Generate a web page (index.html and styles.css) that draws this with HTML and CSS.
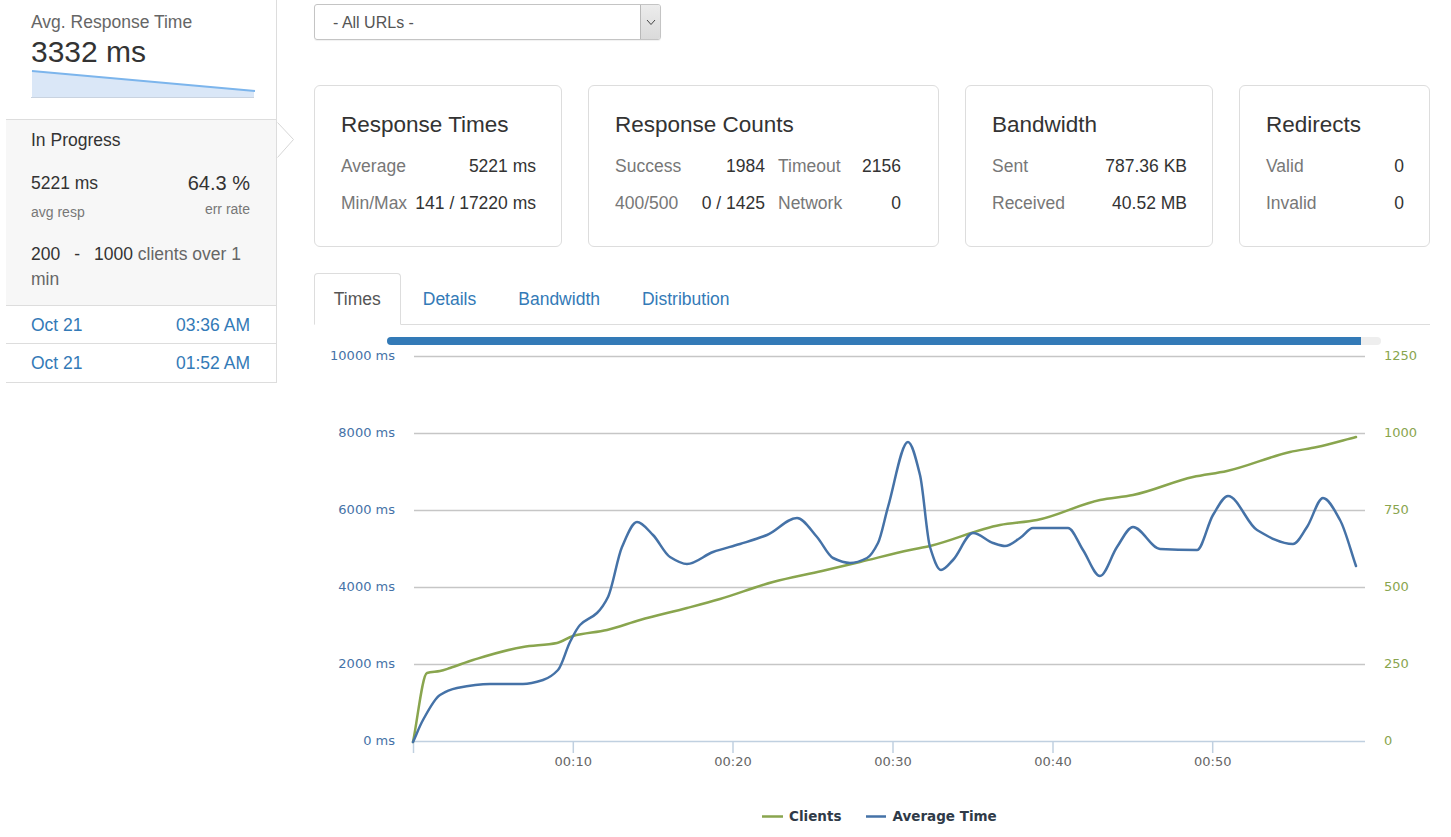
FILE: index.html
```html
<!DOCTYPE html>
<html lang="en">
<head>
<meta charset="utf-8">
<title>Load Test</title>
<link rel="stylesheet" href="styles.css">
</head>
<body>
<div class="page">
  <aside class="sidebar">
    <div class="summary">
      <div class="summary-label">Avg. Response Time</div>
      <div class="summary-value">3332 ms</div>
      <svg class="spark" width="225" height="30" viewBox="31 67 225 30">
        <polygon points="32,70 254,90 254,96 32,96" fill="#dae7f7"/>
        <line x1="31" y1="96.5" x2="254" y2="96.5" stroke="#c9d3e0" stroke-width="1"/>
        <line x1="32" y1="70" x2="255" y2="90" stroke="#7cb5ec" stroke-width="2"/>
      </svg>
    </div>
    <div class="run">
      <div class="run-title">In Progress</div>
      <div class="run-stats">
        <div class="stat">
          <div class="stat-val">5221 ms</div>
          <div class="stat-lbl">avg resp</div>
        </div>
        <div class="stat stat-right">
          <div class="stat-val stat-big">64.3 %</div>
          <div class="stat-lbl stat-lbl-right">err rate</div>
        </div>
      </div>
      <p class="run-clients"><span class="num">200</span><span class="sep">-</span><span class="num">1000</span> <span class="muted">clients over 1</span> <span class="muted">min</span></p>
      <svg class="arrow" width="18" height="37" viewBox="0 0 18 37">
        <polyline points="0.5,0.5 16.5,17.5 0.5,35.5" fill="#fff" stroke="#d6d6d6" stroke-width="1"/>
      </svg>
    </div>
    <div class="run-row"><span>Oct 21</span><span>03:36 AM</span></div>
    <div class="run-row"><span>Oct 21</span><span>01:52 AM</span></div>
  </aside>

  <main class="main">
    <div class="url-select">
      <div class="url-select-text">- All URLs -</div>
      <div class="url-select-btn">
        <svg width="10" height="7" viewBox="0 0 10 7"><polyline points="1,1 5,5.5 9,1" fill="none" stroke="#444" stroke-width="1"/></svg>
      </div>
    </div>

    <div class="cards">
      <div class="card card-1">
        <div class="card-title">Response Times</div>
        <div class="card-row"><span class="lbl">Average</span><span class="val">5221 ms</span></div>
        <div class="card-row"><span class="lbl">Min/Max</span><span class="val">141 / 17220 ms</span></div>
      </div>
      <div class="card card-2">
        <div class="card-title">Response Counts</div>
        <div class="count-grid">
          <span class="lbl">Success</span><span class="val r">1984</span><span class="lbl c3">Timeout</span><span class="val r">2156</span>
          <span class="lbl">400/500</span><span class="val r">0 / 1425</span><span class="lbl c3">Network</span><span class="val r">0</span>
        </div>
      </div>
      <div class="card card-3">
        <div class="card-title">Bandwidth</div>
        <div class="card-row"><span class="lbl">Sent</span><span class="val">787.36 KB</span></div>
        <div class="card-row"><span class="lbl">Received</span><span class="val">40.52 MB</span></div>
      </div>
      <div class="card card-4">
        <div class="card-title">Redirects</div>
        <div class="card-row"><span class="lbl">Valid</span><span class="val">0</span></div>
        <div class="card-row"><span class="lbl">Invalid</span><span class="val">0</span></div>
      </div>
    </div>

    <ul class="tabs">
      <li class="tab active">Times</li>
      <li class="tab">Details</li>
      <li class="tab">Bandwidth</li>
      <li class="tab">Distribution</li>
    </ul>

    <div class="progress"><div class="progress-fill"></div></div>

    <svg class="chart" width="1116" height="492" viewBox="314 345 1116 492">
      <g class="grid" stroke="#c6c6c6" stroke-width="1.5">
        <line x1="414" y1="356.5" x2="1365" y2="356.5"/>
        <line x1="414" y1="433.5" x2="1365" y2="433.5"/>
        <line x1="414" y1="510.5" x2="1365" y2="510.5"/>
        <line x1="414" y1="587.5" x2="1365" y2="587.5"/>
        <line x1="414" y1="664.5" x2="1365" y2="664.5"/>
      </g>
      <line x1="413" y1="741.5" x2="1365" y2="741.5" stroke="#c0d0e0" stroke-width="1.5"/>
      <g stroke="#c0d0e0" stroke-width="1.5">
        <line x1="413.5" y1="742" x2="413.5" y2="753"/>
        <line x1="573.3" y1="742" x2="573.3" y2="753"/>
        <line x1="733" y1="742" x2="733" y2="753"/>
        <line x1="893" y1="742" x2="893" y2="753"/>
        <line x1="1053" y1="742" x2="1053" y2="753"/>
        <line x1="1212.7" y1="742" x2="1212.7" y2="753"/>
      </g>
      <g class="ylabels-left" text-anchor="end">
        <text x="395" y="359.7">10000 ms</text>
        <text x="395" y="436.7">8000 ms</text>
        <text x="395" y="513.7">6000 ms</text>
        <text x="395" y="590.7">4000 ms</text>
        <text x="395" y="667.7">2000 ms</text>
        <text x="395" y="744.7">0 ms</text>
      </g>
      <g class="ylabels-right" text-anchor="start">
        <text x="1384" y="359.7">1250</text>
        <text x="1384" y="436.7">1000</text>
        <text x="1384" y="513.7">750</text>
        <text x="1384" y="590.7">500</text>
        <text x="1384" y="667.7">250</text>
        <text x="1384" y="744.7">0</text>
      </g>
      <g class="xlabels" text-anchor="middle">
        <text x="573.3" y="766.4">00:10</text>
        <text x="733" y="766.4">00:20</text>
        <text x="893" y="766.4">00:30</text>
        <text x="1053" y="766.4">00:40</text>
        <text x="1212.7" y="766.4">00:50</text>
      </g>
      <path class="series series-clients" d="M413,742 L427,673 L440,671 L450,668 L473,660 L523,647 L557,643 L573,636 L607,630 L640,620 L687,608 L720,599 L773,582 L822,571 L860,562 L910,550 L930,546 L1000,525 L1037,520 L1100,500 L1133,495 L1193,477 L1227,471 L1290,452 L1317,447 L1356,437"/>
      <path class="series series-time" d="M413,742 L423,720 L440,695 L457,688 L490,684 L523,684 L543,680 L558,670 L570,642 L580,625 L597,613 L608,597 L622,547 L637,522 L653,535 L670,557 L687,564 L713,552 L740,544 L767,535 L797,518 L817,537 L833,558 L850,563 L867,558 L878,543 L888,507 L908,442 L920,475 L930,547 L941,570 L953,560 L973,533 L993,543 L1005,546 L1020,538 L1033,528 L1068,528 L1083,550 L1100,576 L1117,547 L1133,527 L1160,549 L1197,550 L1213,515 L1228,496 L1257,530 L1293,544 L1307,527 L1323,498 L1340,520 L1356,566"/>
      <g class="legend">
        <line x1="762" y1="816.5" x2="783" y2="816.5" stroke="#89a54e" stroke-width="2.5"/>
        <text x="789" y="820.6">Clients</text>
        <line x1="866" y1="816.5" x2="886" y2="816.5" stroke="#4572a7" stroke-width="2.5"/>
        <text x="892.5" y="820.6">Average Time</text>
      </g>
    </svg>
  </main>
</div>
<script src="script.js"></script>
</body>
</html>
```

FILE: styles.css
```css
* { box-sizing: border-box; }

body {
  margin: 0;
  font-family: "Liberation Sans", Arial, Helvetica, sans-serif;
  font-size: 17.5px;
  line-height: 25px;
  color: #333;
  background: #fff;
}

.page {
  display: flex;
  align-items: flex-start;
}

/* ---------- sidebar ---------- */
.sidebar {
  margin-left: 6px;
  width: 271px;
  border-right: 1px solid #ddd;
}

.summary {
  padding: 10px 25px 0 25px;
}

.summary-label {
  color: #666;
  line-height: 25px;
}

.summary-value {
  font-size: 30px;
  line-height: 33px;
  color: #333;
}

.spark {
  display: block;
  margin-bottom: 21px;
}

.run {
  position: relative;
  background: #f7f7f7;
  border-top: 1px solid #ddd;
  border-bottom: 1px solid #ddd;
  padding: 7.5px 26px 13px 25px;
}

.run-title {
  line-height: 25px;
}

.run-stats {
  display: flex;
  justify-content: space-between;
  margin-top: 18.5px;
}

.stat-val {
  line-height: 25px;
}

.stat-big {
  font-size: 20px;
}

.stat-lbl {
  font-size: 14px;
  line-height: 20px;
  color: #777;
  margin-top: 5.5px;
}

.stat-right {
  text-align: right;
}

.stat-lbl-right {
  margin-top: 2.5px;
}

.run-clients {
  margin: 20.5px 0 0 0;
  line-height: 25px;
}

.sep {
  margin: 0 14px;
}

.muted {
  color: #666;
}

.arrow {
  position: absolute;
  top: 2px;
  left: calc(100% + 1px);
  display: block;
}

.run-row {
  display: flex;
  justify-content: space-between;
  align-items: center;
  height: 38px;
  padding: 1px 26px 0 25px;
  border-bottom: 1px solid #ddd;
  color: #337ab7;
}

.run-row:last-child {
  height: 39px;
}

/* ---------- main ---------- */
.main {
  margin-left: 37px;
  width: 1116px;
  padding-top: 4px;
}

.url-select {
  display: flex;
  width: 347px;
  height: 36px;
  border: 1px solid #c4c4c4;
  border-radius: 3px;
  box-shadow: 0 1px 1px rgba(0, 0, 0, 0.06);
  overflow: hidden;
}

.url-select-text {
  flex: 1;
  padding: 2px 0 0 18px;
  font-size: 16px;
  line-height: 32px;
  color: #555;
}

.url-select-btn {
  width: 20px;
  border-left: 1px solid #b9b9b9;
  background: linear-gradient(#ececec, #dadada);
  display: flex;
  align-items: center;
  justify-content: center;
}

.url-select-btn svg {
  display: block;
}

.cards {
  display: flex;
  gap: 26px;
  margin-top: 45px;
}

.card {
  border: 1px solid #ddd;
  border-radius: 6px;
  padding: 25.5px 25px 24px 26px;
}

.card-1 { width: 248px; }
.card-2 { width: 351px; padding-right: 36px; }
.card-3 { width: 248px; }
.card-4 { width: 191px; }

.card-title {
  font-size: 22.5px;
  line-height: 25px;
  color: #333;
  margin-bottom: 11.5px;
}

.card-row {
  display: flex;
  justify-content: space-between;
  align-items: center;
  height: 37px;
  white-space: nowrap;
}

.lbl {
  color: #777;
}

.val {
  color: #333;
}

.count-grid {
  display: grid;
  grid-template-columns: 75px 75px 93px 43px;
  grid-auto-rows: 37px;
  align-items: center;
  white-space: nowrap;
}

.count-grid .r {
  text-align: right;
}

.count-grid .c3 {
  padding-left: 13px;
}

.tabs {
  list-style: none;
  margin: 26px 0 0 0;
  padding: 0;
  display: flex;
  border-bottom: 1px solid #ddd;
}

.tab {
  margin-right: 2.5px;
  margin-bottom: -1px;
  padding: 12.5px 18.75px;
  line-height: 25px;
  border: 1px solid transparent;
  border-radius: 4px 4px 0 0;
  color: #337ab7;
}

.tab.active {
  color: #555;
  background: #fff;
  border-color: #ddd #ddd transparent #ddd;
}

.progress {
  margin: 12px 0 0 73px;
  width: 994px;
  height: 8px;
  border-radius: 4px;
  background: #eeeeee;
  overflow: hidden;
}

.progress-fill {
  width: 974px;
  height: 100%;
  background: #337ab7;
}

.chart {
  display: block;
  font-family: "DejaVu Sans", Verdana, sans-serif;
  font-size: 13px;
}

.ylabels-left text { fill: #4572a7; }
.ylabels-right text { fill: #89a54e; }
.xlabels text { fill: #666; }

.series {
  fill: none;
  stroke-width: 2.5;
  stroke-linejoin: round;
  stroke-linecap: round;
}

.series-clients { stroke: #89a54e; }
.series-time { stroke: #4572a7; }

.legend text {
  font-weight: bold;
  font-size: 13.5px;
  fill: #2f3a48;
}
```

FILE: script.js
```js
document.querySelectorAll('path.series').forEach(function (path) {
  var nums = path.getAttribute('d').match(/-?\d+(\.\d+)?/g).map(Number);
  var xs = [], ys = [];
  for (var i = 0; i < nums.length; i += 2) { xs.push(nums[i]); ys.push(nums[i + 1]); }
  var n = xs.length;
  var dx = [], m = [];
  for (var k = 0; k < n - 1; k++) {
    dx.push(xs[k + 1] - xs[k]);
    m.push((ys[k + 1] - ys[k]) / (xs[k + 1] - xs[k]));
  }
  var t = new Array(n);
  t[0] = m[0];
  t[n - 1] = m[n - 2];
  for (var j = 1; j < n - 1; j++) {
    if (m[j - 1] * m[j] <= 0) {
      t[j] = 0;
    } else {
      var h0 = dx[j - 1], h1 = dx[j];
      t[j] = 3 * (h0 + h1) / ((2 * h1 + h0) / m[j - 1] + (h1 + 2 * h0) / m[j]);
    }
  }
  var d = 'M' + xs[0] + ',' + ys[0];
  for (var q = 0; q < n - 1; q++) {
    var h = dx[q] / 3;
    d += ' C' + (xs[q] + h).toFixed(2) + ',' + (ys[q] + t[q] * h).toFixed(2) + ' ' +
         (xs[q + 1] - h).toFixed(2) + ',' + (ys[q + 1] - t[q + 1] * h).toFixed(2) + ' ' +
         xs[q + 1] + ',' + ys[q + 1];
  }
  path.setAttribute('d', d);
});
```
